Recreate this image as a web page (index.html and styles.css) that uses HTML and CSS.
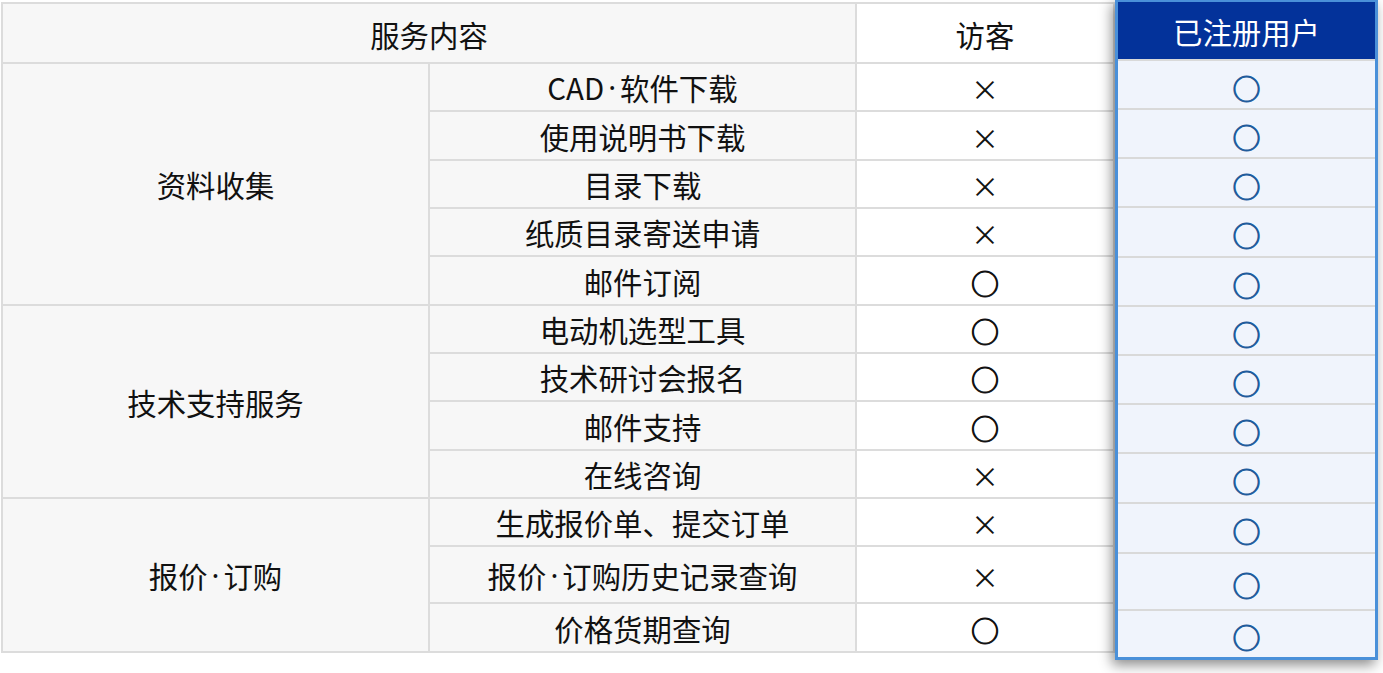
FILE: index.html
```html
<!DOCTYPE html>
<html lang="zh-CN">
<head>
<meta charset="utf-8">
<title>服务内容</title>
<link rel="stylesheet" href="styles.css">
</head>
<body>
<div class="page">
  <div class="table">
    <div class="cell head span2">服务内容</div>
    <div class="cell head white">访客</div>

    <div class="cell group g1">资料收集</div>
    <div class="cell">CAD<span class="dot">·</span>软件下载</div>
    <div class="cell white mark">×</div>
    <div class="cell">使用说明书下载</div>
    <div class="cell white mark">×</div>
    <div class="cell">目录下载</div>
    <div class="cell white mark">×</div>
    <div class="cell">纸质目录寄送申请</div>
    <div class="cell white mark">×</div>
    <div class="cell">邮件订阅</div>
    <div class="cell white mark ring">○</div>

    <div class="cell group g2">技术支持服务</div>
    <div class="cell">电动机选型工具</div>
    <div class="cell white mark ring">○</div>
    <div class="cell">技术研讨会报名</div>
    <div class="cell white mark ring">○</div>
    <div class="cell">邮件支持</div>
    <div class="cell white mark ring">○</div>
    <div class="cell">在线咨询</div>
    <div class="cell white mark">×</div>

    <div class="cell group g3">报价<span class="dot">·</span>订购</div>
    <div class="cell">生成报价单、提交订单</div>
    <div class="cell white mark">×</div>
    <div class="cell">报价<span class="dot">·</span>订购历史记录查询</div>
    <div class="cell white mark">×</div>
    <div class="cell">价格货期查询</div>
    <div class="cell white mark ring">○</div>
  </div>

  <div class="member">
    <div class="mhead">已注册用户</div>
    <div class="mcell r49">○</div>
    <div class="mcell r49">○</div>
    <div class="mcell r49">○</div>
    <div class="mcell r50">○</div>
    <div class="mcell r49">○</div>
    <div class="mcell r49">○</div>
    <div class="mcell r49">○</div>
    <div class="mcell r49">○</div>
    <div class="mcell r50">○</div>
    <div class="mcell r50">○</div>
    <div class="mcell r57">○</div>
    <div class="mcell last">○</div>
  </div>
</div>
</body>
</html>
```

FILE: styles.css
```css
* { box-sizing: border-box; }

html, body {
  margin: 0;
  padding: 0;
  background: #fff;
}

body {
  font-family: "Noto Sans CJK SC", "Noto Sans", sans-serif;
  color: #111;
  width: 1383px;
  height: 673px;
  overflow: hidden;
}

.page {
  display: flex;
  align-items: flex-start;
  padding: 2px 0 0 1px;
}

.table {
  display: grid;
  grid-template-columns: 425px 425px 256px;
  grid-template-rows: 58px 46px 47px 46px 46px 47px 46px 46px 47px 46px 46px 55px 47px;
  gap: 2px;
  padding: 2px;
  background: #dcdcdc;
  width: 1114px;
  flex: none;
}

.cell {
  background: #f7f7f7;
  display: flex;
  align-items: center;
  justify-content: center;
  font-size: 29.4px;
  line-height: 1;
  padding-top: 2px;
  white-space: nowrap;
}

.dot {
  font-family: "Noto Sans", sans-serif;
  margin: 0 4px;
}

.white { background: #fff; }

.head { padding-top: 4px; }

.span2 { grid-column: 1 / 3; }

.group { grid-column: 1; }
.g1 { grid-row: 2 / 7; }
.g2 { grid-row: 7 / 11; }
.g3 { grid-row: 11 / 14; }

.mark {
  font-size: 28px;
  padding-top: 4px;
}

.ring {
  -webkit-text-stroke: 1px currentColor;
}

.member {
  flex: none;
  width: 263px;
  margin-top: -3px;
  border: 3px solid #4a90d9;
  background: #f0f4fc;
  box-shadow: -3px 5px 12px rgba(0, 0, 0, 0.45);
  display: flex;
  flex-direction: column;
  position: relative;
}

.mhead {
  height: 59px;
  background: #03329a;
  color: #fff;
  border-bottom: 2px solid #d9d9d9;
  display: flex;
  align-items: center;
  justify-content: center;
  font-size: 29.4px;
  line-height: 1;
  padding-top: 2px;
}

.mcell {
  border-bottom: 2px solid #d9d9d9;
  display: flex;
  align-items: center;
  justify-content: center;
  color: #1f5c9c;
  font-size: 28px;
  line-height: 1;
  padding-top: 6px;
  -webkit-text-stroke: 1px currentColor;
}

.r49 { height: 49px; }
.r50 { height: 50px; }
.r57 { height: 57px; }
.last { height: 46px; border-bottom: none; }
```
